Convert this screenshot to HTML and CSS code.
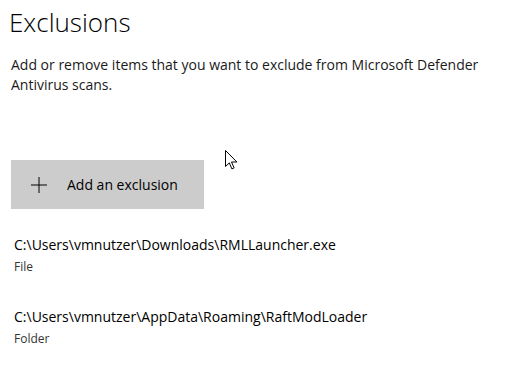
FILE: index.html
```html
<!DOCTYPE html>
<html lang="en">
<head>
    <meta charset="UTF-8">
    <title>Exclusions</title>
    <link rel="stylesheet" href="styles.css">
</head>
<body>
    <div class="page">
        <h1>Exclusions</h1>
        <p class="intro">Add or remove items that you want to exclude from Microsoft Defender Antivirus scans.</p>
        <button class="add-btn">
            <svg class="plus" width="16" height="16" viewBox="0 0 16 16"><path d="M8 0v16M0 8h16" stroke="#000" stroke-width="1"/></svg>
            <span>Add an exclusion</span>
        </button>
        <div class="item">
            <div class="path">C:\Users\vmnutzer\Downloads\RMLLauncher.exe</div>
            <div class="kind">File</div>
        </div>
        <div class="item">
            <div class="path">C:\Users\vmnutzer\AppData\Roaming\RaftModLoader</div>
            <div class="kind">Folder</div>
        </div>
    </div>
    <svg class="cursor" width="13" height="20" viewBox="0 0 13 20"><path d="M0.5 0.5v16l3.8-3.6 2.6 6 2.2-1-2.6-5.9h5.4z" fill="#fff" stroke="#000" stroke-width="1"/></svg>
</body>
</html>
```

FILE: styles.css
```css
body {
    margin: 0;
    background: #fff;
    font-family: "Open Sans", Arial, sans-serif;
    color: #000;
}
.page {
    padding: 4px 11px 0 11px;
}
h1 {
    font-weight: 300;
    font-size: 26px;
    margin: 0;
    line-height: 36px;
    margin-left: -2px;
}
.intro {
    font-size: 14px;
    line-height: 20px;
    margin: 15px 0 0 0;
    color: #1a1a1a;
}
.add-btn {
    display: flex;
    align-items: center;
    width: 193px;
    height: 49px;
    margin-top: 65px;
    border: none;
    background: #cccccc;
    padding: 0 0 0 20px;
    font-family: inherit;
    font-size: 14px;
    color: #000;
}
.plus {
    margin-right: 20px;
}
.item {
    margin-top: 26px;
    padding-left: 3px;
}
.item + .item {
    margin-top: 31px;
}
.path {
    font-size: 14px;
    line-height: 20px;
}
.kind {
    font-size: 12px;
    line-height: 18px;
    margin-top: 3px;
    color: #333;
}
.cursor {
    position: absolute;
    left: 225px;
    top: 150px;
}
```
